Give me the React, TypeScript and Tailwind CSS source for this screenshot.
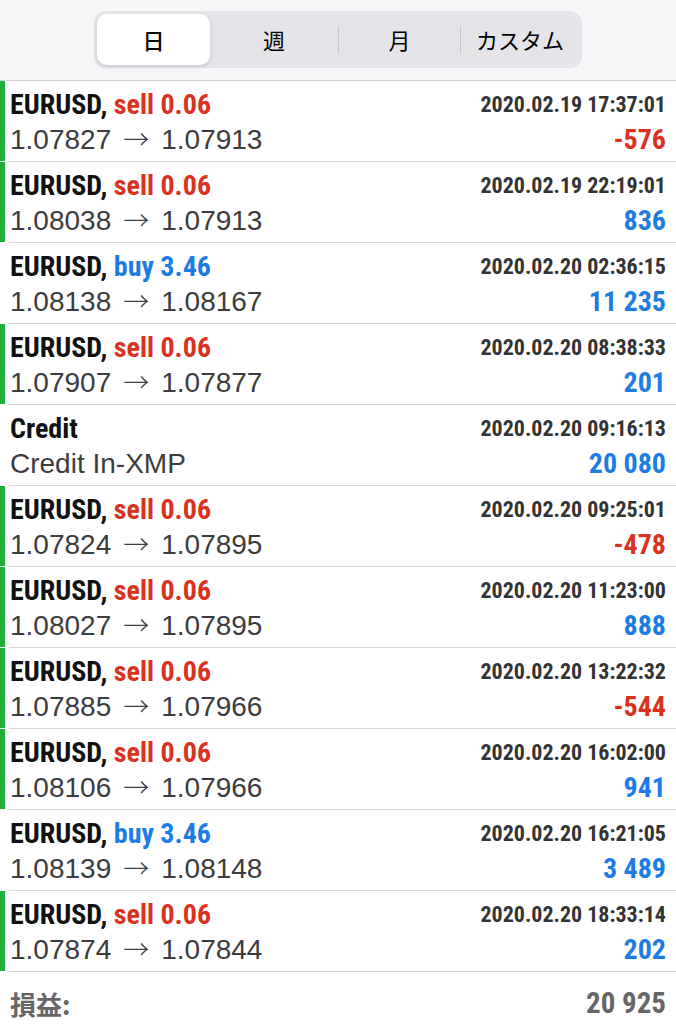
const cond = "font-['Liberation_Sans_Narrow','Roboto_Condensed','Arial_Narrow','Liberation_Sans',sans-serif] [font-stretch:condensed]";

type Row = {
  title: string;
  side?: "sell" | "buy";
  lot?: string;
  from?: string;
  to?: string;
  sub?: string;
  time: string;
  profit: string;
  green: boolean;
};

const rows: Row[] = [
  { title: "EURUSD", side: "sell", lot: "0.06", from: "1.07827", to: "1.07913", time: "2020.02.19 17:37:01", profit: "-576", green: true },
  { title: "EURUSD", side: "sell", lot: "0.06", from: "1.08038", to: "1.07913", time: "2020.02.19 22:19:01", profit: "836", green: true },
  { title: "EURUSD", side: "buy", lot: "3.46", from: "1.08138", to: "1.08167", time: "2020.02.20 02:36:15", profit: "11 235", green: false },
  { title: "EURUSD", side: "sell", lot: "0.06", from: "1.07907", to: "1.07877", time: "2020.02.20 08:38:33", profit: "201", green: true },
  { title: "Credit", sub: "Credit In-XMP", time: "2020.02.20 09:16:13", profit: "20 080", green: false },
  { title: "EURUSD", side: "sell", lot: "0.06", from: "1.07824", to: "1.07895", time: "2020.02.20 09:25:01", profit: "-478", green: true },
  { title: "EURUSD", side: "sell", lot: "0.06", from: "1.08027", to: "1.07895", time: "2020.02.20 11:23:00", profit: "888", green: true },
  { title: "EURUSD", side: "sell", lot: "0.06", from: "1.07885", to: "1.07966", time: "2020.02.20 13:22:32", profit: "-544", green: true },
  { title: "EURUSD", side: "sell", lot: "0.06", from: "1.08106", to: "1.07966", time: "2020.02.20 16:02:00", profit: "941", green: true },
  { title: "EURUSD", side: "buy", lot: "3.46", from: "1.08139", to: "1.08148", time: "2020.02.20 16:21:05", profit: "3 489", green: false },
  { title: "EURUSD", side: "sell", lot: "0.06", from: "1.07874", to: "1.07844", time: "2020.02.20 18:33:14", profit: "202", green: true },
];

const segs = [
  { t: "日", w: "w-[113px]" },
  { t: "週", w: "w-[128px]" },
  { t: "月", w: "w-[122px]" },
  { t: "カスタム", w: "w-[119px]" },
];

function Segments() {
  return (
    <div className="flex h-[81px] items-start justify-center border-b border-[#d0d0d4] bg-[#f6f6f8] pt-[11px]">
      <div className="flex h-[57px] w-[488px] items-center rounded-[12px] bg-[#e4e4e9] p-[3px]">
        {segs.map((s, i) => (
          <div key={s.t} className={"flex h-full items-center " + s.w}>
            {i > 1 && <div className="h-[28px] w-px bg-[#c7c7cc]" />}
            <div
              className={
                "flex h-full flex-1 items-center justify-center text-[22px] text-black font-['Noto_Sans_CJK_JP',sans-serif] " +
                (i === 0 ? "rounded-[10px] bg-white font-medium shadow-[0_2px_5px_rgba(0,0,0,0.12)]" : "")
              }
            >
              {s.t}
            </div>
          </div>
        ))}
      </div>
    </div>
  );
}

function TradeRow({ r }: { r: Row }) {
  const pos = !r.profit.startsWith("-");
  return (
    <div className="flex h-[81px]">
      <div className={"mb-px w-[5px] shrink-0 " + (r.green ? "bg-[#1fb03a]" : "bg-white")} />
      <div className="w-[4px] shrink-0" />
      <div className="flex flex-1 justify-between border-b border-[#d6d6d6] pl-[1px] pr-[10px]">
        <div className="flex flex-col pt-[8px]">
          <div className={cond + " text-[28px] font-bold leading-[32px] text-[#111]"}>
            {r.title}
            {r.side && (
              <>
                ,{" "}
                <span className={r.side === "sell" ? "text-[#d9321f]" : "text-[#1d7ce3]"}>
                  {r.side} {r.lot}
                </span>
              </>
            )}
          </div>
          <div className="h-[38px] font-['Liberation_Sans',sans-serif] text-[28px] leading-[38px] text-[#3c3c3e]">
            {r.sub ?? (
              <>
                {r.from}
                <span className="inline-block w-[50px] text-center font-['Noto_Sans_CJK_JP',sans-serif] text-[26px] font-light leading-none">
                  →
                </span>
                {r.to}
              </>
            )}
          </div>
        </div>
        <div className="flex flex-col items-end pt-[9px]">
          <div className={cond + " text-[22px] font-bold leading-[30px] text-[#333]"}>{r.time}</div>
          <div
            className={
              cond + " text-[28px] font-bold leading-[40px] " + (pos ? "text-[#1d7ce3]" : "text-[#d9321f]")
            }
          >
            {r.profit}
          </div>
        </div>
      </div>
    </div>
  );
}

export default function App() {
  return (
    <div className="h-[1024px] w-[676px] overflow-hidden bg-white">
      <Segments />
      {rows.map((r, i) => (
        <TradeRow key={i} r={r} />
      ))}
      <div className="flex items-center justify-between pl-[10px] pr-[10px] pt-[10px]">
        <span className="font-['Noto_Sans_CJK_JP',sans-serif] text-[26px] font-bold text-[#666]">損益:</span>
        <span className={cond + " text-[29px] font-bold text-[#666]"}>20 925</span>
      </div>
    </div>
  );
}
